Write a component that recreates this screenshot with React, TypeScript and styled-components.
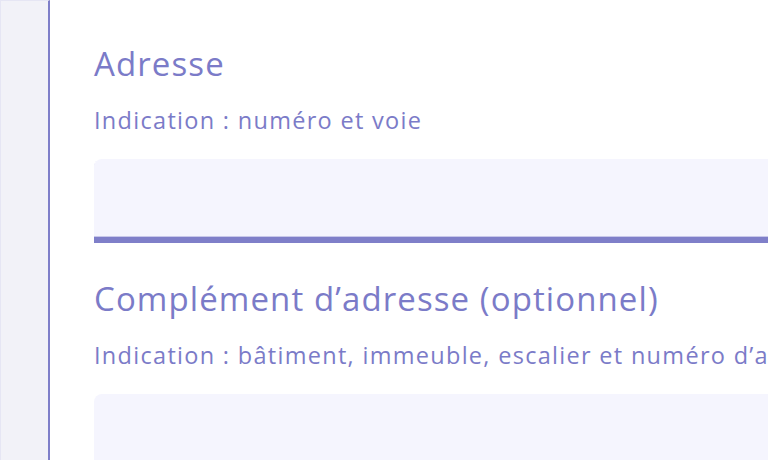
import React from 'react';
import styled, { createGlobalStyle } from 'styled-components';

const Global = createGlobalStyle`
	html, body {
		margin: 0;
		padding: 0;
		background: #ffffff;
		overflow: hidden;
	}
	body {
		font-family: 'Open Sans', 'Noto Sans', sans-serif;
	}
`;

const Page = styled.div`
	display: flex;
	width: 768px;
	height: 460px;
	overflow: hidden;
`;

const Gutter = styled.div`
	flex: 0 0 47px;
	background: #f2f2f8;
	border-left: 1px solid #e6e6f4;
	border-top: 1px solid #e6e6f4;
	border-right: 2px solid #7f7fc9;
`;

const Form = styled.div`
	flex: 1;
	padding: 44px 0 0 44px;
	display: flex;
	flex-direction: column;
	min-width: 0;
`;

const Group = styled.div<{ gap?: number }>`
	display: flex;
	flex-direction: column;
	margin-bottom: ${(p) => p.gap ?? 0}px;
`;

const Label = styled.div`
	font-size: 33px;
	line-height: 40px;
	letter-spacing: 1.1px;
	color: #7b7bc8;
	white-space: nowrap;
`;

const Hint = styled.div`
	font-size: 23.5px;
	line-height: 30px;
	letter-spacing: 1.3px;
	color: #7b7bc8;
	margin-top: 21px;
	white-space: nowrap;
`;

const Input = styled.div<{ underline?: boolean }>`
	margin-top: 24px;
	width: 720px;
	height: 78px;
	background: #f5f5fe;
	border-radius: 8px 0 0 0;
	border-bottom: ${(p) => (p.underline ? '6px solid #7f7fc9' : 'none')};
	box-shadow: ${(p) => (p.underline ? 'inset 0 -1px 0 #c8c8ea' : 'none')};
`;

export default function App() {
	return (
		<>
			<Global />
			<Page>
				<Gutter />
				<Form>
					<Group gap={36}>
						<Label>Adresse</Label>
						<Hint>Indication : numéro et voie</Hint>
						<Input underline />
					</Group>
					<Group>
						<Label>Complément d’adresse (optionnel)</Label>
						<Hint>Indication : bâtiment, immeuble, escalier et numéro d’appartement</Hint>
						<Input />
					</Group>
				</Form>
			</Page>
		</>
	);
}
